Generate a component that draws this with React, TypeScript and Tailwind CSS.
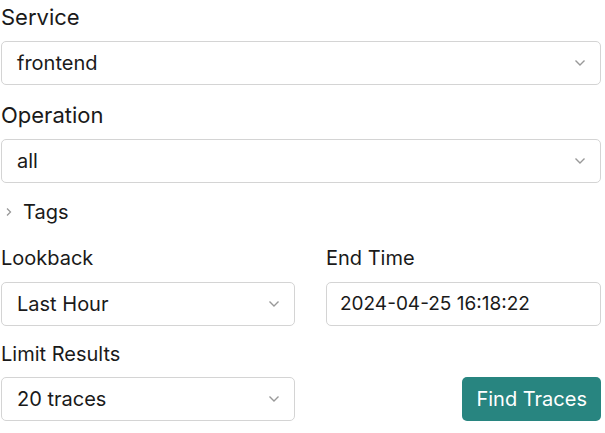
function Chevron() {
  return (
    <svg width="12" height="8" viewBox="0 0 12 8" className="text-[#999999]">
      <path d="M1.5 1.5 L6 6 L10.5 1.5" fill="none" stroke="currentColor" strokeWidth="1.4" />
    </svg>
  );
}

function Select({ value }: { value: string }) {
  return (
    <div className="flex h-[44px] items-center justify-between rounded-[5px] border border-[#d4d4d4] bg-white pl-[15px] pr-[14px] text-[20px] text-[#1a1a1a]">
      <span>{value}</span>
      <Chevron />
    </div>
  );
}

export default function App() {
  return (
    <div
      className="w-[605px] bg-white px-[1px] pt-[1px] text-[#1a1a1a]"
      style={{ fontFamily: "Inter, 'Noto Sans', sans-serif" }}
    >
      <div className="w-[600px]">
        <div className="text-[22px] leading-[32px]">Service</div>
        <div className="mt-[8px]">
          <Select value="frontend" />
        </div>
        <div className="mt-[14px] text-[22px] leading-[32px]">Operation</div>
        <div className="mt-[8px]">
          <Select value="all" />
        </div>
        <div className="mt-[14px] flex items-center gap-[10px] text-[20px]">
          <svg width="8" height="10" viewBox="0 0 8 10" className="ml-[4px] text-[#999999]">
            <path d="M2 1.5 L5.5 5 L2 8.5" fill="none" stroke="currentColor" strokeWidth="1.3" />
          </svg>
          <span>Tags</span>
        </div>
        <div className="mt-[17px] grid grid-cols-[294px_275px] gap-x-[31px]">
          <div>
            <div className="text-[20px] leading-[28px]">Lookback</div>
            <div className="mt-[10px]">
              <Select value="Last Hour" />
            </div>
          </div>
          <div>
            <div className="text-[20px] leading-[28px]">End Time</div>
            <div className="mt-[10px] flex h-[44px] items-center rounded-[5px] border border-[#d4d4d4] px-[13px] text-[19px]">
              2024-04-25 16:18:22
            </div>
          </div>
        </div>
        <div className="mt-[14px] text-[20px] leading-[28px]">Limit Results</div>
        <div className="mt-[9px] flex items-center justify-between">
          <div className="w-[294px]">
            <Select value="20 traces" />
          </div>
          <button className="h-[44px] rounded-[5px] bg-[#288580] px-[14px] text-[20px] text-white">
            Find Traces
          </button>
        </div>
      </div>
    </div>
  );
}
